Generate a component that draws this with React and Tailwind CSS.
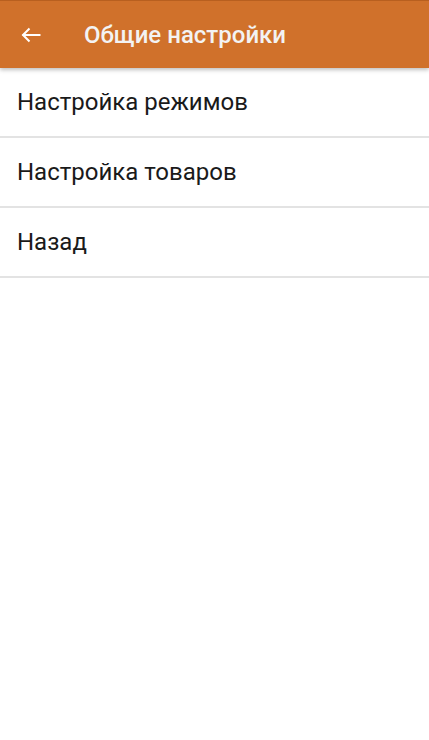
const ITEMS = ['Настройка режимов', 'Настройка товаров', 'Назад'];

function BackArrow() {
  return (
    <svg width="20" height="16" viewBox="0 0 20 16" fill="none" stroke="white" strokeWidth="2" strokeLinecap="square">
      <path d="M18.5 8H2.5" />
      <path d="M8.5 1.5 2 8l6.5 6.5" strokeLinecap="butt" />
    </svg>
  );
}

export default function App() {
  return (
    <div className="min-h-[740px] w-full bg-white font-['Roboto',sans-serif]">
      <div className="relative z-10 flex h-[68px] items-center bg-[#d0712b] shadow-[0_2px_4px_rgba(0,0,0,0.25)] border-t border-[#b85f1f]">
        <button className="ml-[21px] flex">
          <BackArrow />
        </button>
        <h1 className="ml-[43px] text-[24px] font-medium text-[#f3f3f3]">Общие настройки</h1>
      </div>
      <ul>
        {ITEMS.map((item) => (
          <li
            key={item}
            className="flex h-[70px] items-center border-b-2 border-[#e3e3e3] pl-[17px] text-[24px] text-[#1a1a1a]"
          >
            {item}
          </li>
        ))}
      </ul>
    </div>
  );
}
